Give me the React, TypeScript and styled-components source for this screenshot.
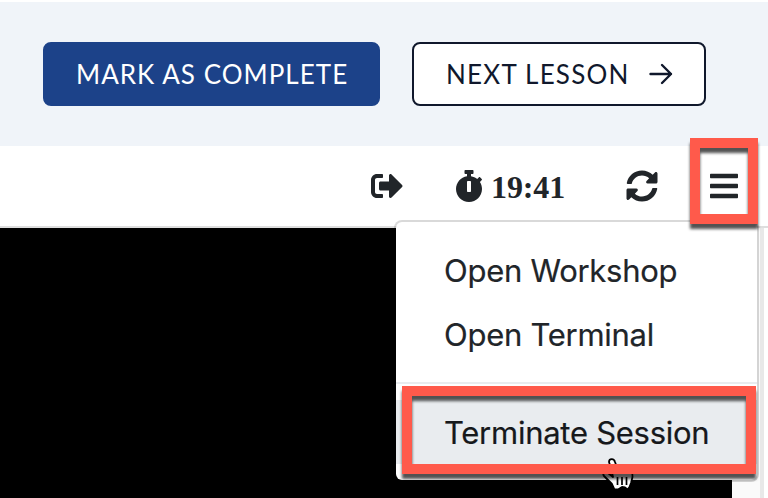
import React from 'react';
import styled, { createGlobalStyle } from 'styled-components';
import { FaBars, FaSignOutAlt, FaStopwatch, FaSyncAlt } from 'react-icons/fa';

const GlobalStyle = createGlobalStyle`
  *, *::before, *::after { box-sizing: border-box; }
  body { margin: 0; background: #fff; overflow: hidden; }
`;

const Page = styled.div`
  position: relative;
  width: 768px;
  height: 498px;
  overflow: hidden;
  display: flex;
  flex-direction: column;
  background: #fff;
  color: #212529;
`;

const LessonBar = styled.header`
  flex: none;
  height: 144px;
  margin-top: 2px;
  padding: 40px 62px 0 43px;
  display: flex;
  justify-content: space-between;
  align-items: flex-start;
  background: #f0f4f9;
`;

const LessonButton = styled.button<{ $primary?: boolean }>`
  width: ${p => (p.$primary ? 337 : 294)}px;
  height: 64px;
  padding: 0 0 0 ${p => (p.$primary ? 31 : 32)}px;
  display: flex;
  align-items: center;
  gap: 19px;
  border: 2px solid ${p => (p.$primary ? '#1c4289' : '#10182c')};
  border-radius: 8px;
  background: ${p => (p.$primary ? '#1c4289' : '#fff')};
  color: ${p => (p.$primary ? '#fff' : '#10182c')};
  font: 400 26px/30px Lato, sans-serif;
  letter-spacing: ${p => (p.$primary ? 1.03 : 1.22)}px;
  white-space: nowrap;
`;

const Toolbar = styled.nav`
  flex: none;
  height: 82px;
  padding: 0 28px 0 371px;
  display: flex;
  align-items: center;
  border-bottom: 2px solid #dedede;
  font: 700 32px/32px "Liberation Serif", serif;
`;

const ToolItem = styled.span<{ $gap?: number }>`
  display: flex;
  align-items: center;
  gap: 6px;
  margin-left: ${p => p.$gap ?? 0}px;
  svg { display: block; flex: none; }
`;

const Clock = styled.time`
  width: 76px;
  padding-top: 2px;
  letter-spacing: -0.1px;
`;

const Workspace = styled.main`
  flex: 1;
  display: flex;
`;

const TerminalPane = styled.div`
  width: 732px;
  background: #000;
`;

const ScrollTrack = styled.div`
  width: 32px;
  background: #fafafa;
  border-right: 4px solid #e8e8e8;
`;

const Menu = styled.div`
  position: absolute;
  left: 394px;
  top: 220px;
  width: 365px;
  height: 262px;
  padding: 16px 0;
  border: 2px solid rgba(0, 0, 0, 0.15);
  border-radius: 8px;
  background: #fff;
  background-clip: padding-box;
`;

const MenuItem = styled.div<{ $active?: boolean }>`
  height: 64px;
  padding: 1px 48px 0;
  background: ${p => (p.$active ? '#e9ecef' : 'transparent')};
  color: ${p => (p.$active ? '#16181b' : '#212529')};
  font: 400 31px/64px Inter, sans-serif;
  letter-spacing: -0.27px;
  -webkit-text-stroke: 0.2px currentColor;
  white-space: nowrap;
`;

const Divider = styled.hr`
  height: 2px;
  margin: 16px 0;
  border: 0;
  background: #e9ecef;
`;

const Highlight = styled.div<{ $x: number; $y: number; $w: number; $h: number }>`
  position: absolute;
  left: ${p => p.$x}px;
  top: ${p => p.$y}px;
  width: ${p => p.$w}px;
  height: ${p => p.$h}px;
  border: 10px solid #ff5a4b;
  filter: drop-shadow(0.5px 5px 1.6px rgba(0, 0, 0, 0.68));
`;

const Pointer = styled.svg`
  position: absolute;
  left: 600px;
  top: 456px;
`;

export default function App() {
  return (
    <>
      <GlobalStyle />
      <Page>
        <LessonBar>
          <LessonButton $primary>MARK AS COMPLETE</LessonButton>
          <LessonButton>
            NEXT LESSON
            <svg width="24" height="22" viewBox="0 0 24 22" fill="none" stroke="currentColor" strokeWidth="2.4" strokeLinecap="round" strokeLinejoin="round">
              <path d="M1.500 11H22M13 2L22 11L13 20" />
            </svg>
          </LessonButton>
        </LessonBar>
        <Toolbar>
          <ToolItem><FaSignOutAlt size={32} /></ToolItem>
          <ToolItem $gap={50}><FaStopwatch size={32} /><Clock>19:41</Clock></ToolItem>
          <ToolItem $gap={59}><FaSyncAlt size={32} /></ToolItem>
          <ToolItem $gap={50}><FaBars size={32} /></ToolItem>
        </Toolbar>
        <Workspace>
          <TerminalPane />
          <ScrollTrack />
        </Workspace>
        <Menu>
          <MenuItem>Open Workshop</MenuItem>
          <MenuItem>Open Terminal</MenuItem>
          <Divider />
          <MenuItem $active>Terminate Session</MenuItem>
        </Menu>
        <Pointer width="36" height="38" viewBox="0 0 36 38">
          <path
            d="M9 6C9 2.500 14 2 15 6L18 14L28 15C31 15 33 17 32.500 21L31 27L29.500 31L27.500 33.500L25 31.500L22 31L18 33.500L14.500 33.500L12 28L4 20C2 17 5 15 8 17L13 21L11 12Z"
            fill="#fff" stroke="#000" strokeWidth="1.8" strokeLinejoin="round"
          />
          <path d="M17.500 21V29M22 21V29M26.500 21V29" stroke="#000" strokeWidth="1.7" />
        </Pointer>
        <Highlight $x={690} $y={138} $w={68} $h={86} />
        <Highlight $x={402} $y={386} $w={354} $h={88} />
      </Page>
    </>
  );
}
